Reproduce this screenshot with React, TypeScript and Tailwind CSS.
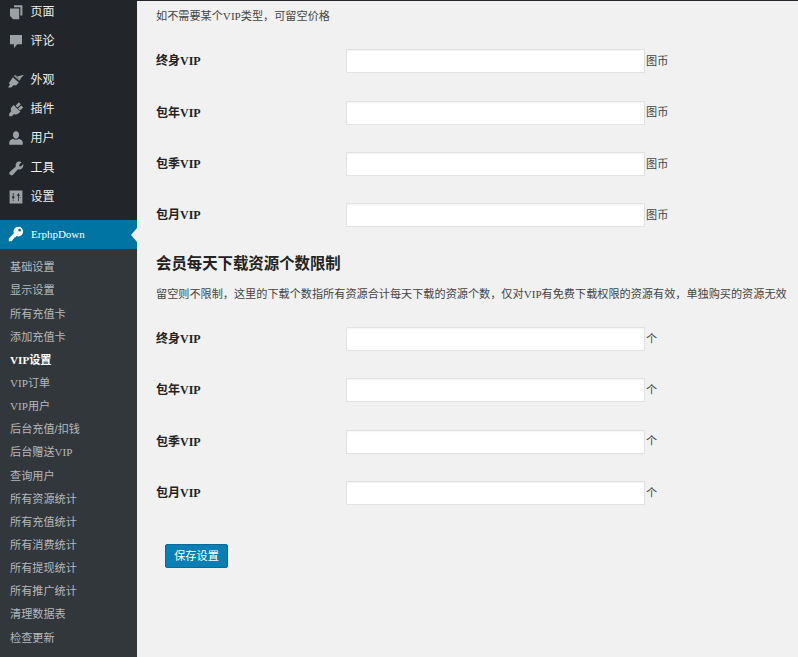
const fontStack = "font-['Liberation_Sans','Noto_Sans_CJK_SC',sans-serif]"

// latin runs in the shot are a narrow serif, the size comes from the parent
const Latin = ({ children }: { children: string }) => (
    <span className="font-['Liberation_Serif','Noto_Sans_CJK_SC',serif]">{children}</span>
)

const Mixed = ({ text }: { text: string }) => {
    const parts = text.split(/([A-Za-z]+)/)
    return (
        <>
            {parts.map((p, i) => (/^[A-Za-z]+$/.test(p) ? <Latin key={i}>{p}</Latin> : <span key={i}>{p}</span>))}
        </>
    )
}

const icons: Record<string, React.ReactNode> = {
    page: (
        <>
            <path d="M7.500 1.500H18v13h-2.500V4H7.500z" />
            <path d="M2.500 5.500H14V19H6.500l-4-4z" />
        </>
    ),
    comment: <path d="M2.500 2.500h15v11.500h-6l-4 5v-5h-5z" />,
    brush: (
        <>
            <path d="M20 3.500L11.500 5.500l3 4z" />
            <path d="M9 3.500l7 6-2 1.500-7-6z" fillOpacity="0.75" />
            <path d="M6 6.500l7.500 6.500-3.500 4-3-.5-3 3H0l2.500-4-1.500-1.500z" />
        </>
    ),
    plug: (
        <>
            <path d="M9.500 6l4-4.500 2.500 2.500-4 4z" />
            <path d="M12.500 9.500l4-4 2.500 2.500-4 4z" />
            <path d="M7 5l8.500 8.500-3 2.500c-1.500 1.200-3.300 1.200-4.800.3l-3 2.700H1.500v-3.500l2.700-2.800c-1-1.500-1-3.500.3-5z" />
        </>
    ),
    user: (
        <path d="M10 1.500c2.400 0 3.800 1.900 3.800 4.300S12.400 10.800 10 10.800 6.200 8.200 6.200 5.800 7.600 1.500 10 1.500zM1.500 15.500c0-2.200 3.200-4 5-4.500 1 1 2.300 1.300 3.500 1.300s2.500-.3 3.500-1.300c1.800.5 5 2.300 5 4.500v3h-17z" />
    ),
    tools: (
        <path d="M17 2.800l-3.200 3 .4 1.900 1.900.4 3-3c.4 2.300-.2 4.200-1.700 5.500-1.400 1.200-3.200 1.400-4.900.9L6 18.800c-.9.800-2.100.8-2.900 0l-.9-.9c-.8-.8-.8-2 0-2.900l7.600-6.800c-.5-1.700-.3-3.500.9-4.900C12.100 1.800 15 1.400 17 2.800z" />
    ),
    settings: (
        <path
            d="M2 2h16v16H2zM6 5v4.500H4.500L6.500 13l2-3.500H7V5zM6 13.500V15h1v-1.500zM13 5l-2 3.500h1.500V15h1V8.500H15zM15.500 10h-1v1h1z"
            fillRule="evenodd"
        />
    ),
    key: (
        <path d="M13 1a6 6 0 0 1 0 12c-.8 0-1.500-.1-2.200-.4L9 14.500H7.500V16H6v1.500L4.500 19H1v-3.500l6.300-6.300A6 6 0 0 1 13 1zm1.500 2.500a1.700 1.700 0 1 0 0 3.400 1.700 1.700 0 0 0 0-3.400z" fillRule="evenodd" />
    ),
}

const MenuIcon = ({ name, active }: { name: string; active?: boolean }) => (
    <svg viewBox="0 0 20 20" className={`w-[16px] h-[16px] shrink-0 ${active ? 'fill-white' : 'fill-[#9ca1a6]'}`}>
        {icons[name]}
    </svg>
)

const MenuItem = ({ icon, label }: { icon: string; label: string }) => (
    <li className="h-[29.300px] flex items-center pl-[8px] gap-[6.500px] text-[#eeeeee] text-[12px]">
        <MenuIcon name={icon} />
        <span>{label}</span>
    </li>
)

const subItems = [
    '基础设置',
    '显示设置',
    '所有充值卡',
    '添加充值卡',
    'VIP设置',
    'VIP订单',
    'VIP用户',
    '后台充值/扣钱',
    '后台赠送VIP',
    '查询用户',
    '所有资源统计',
    '所有充值统计',
    '所有消费统计',
    '所有提现统计',
    '所有推广统计',
    '清理数据表',
    '检查更新',
]

const Sidebar = () => (
    <aside className="w-[137px] shrink-0 bg-[#22262b] flex flex-col">
        <ul className="-mt-[2.500px]">
            <MenuItem icon="page" label="页面" />
            <MenuItem icon="comment" label="评论" />
        </ul>
        <ul className="mt-[9px]">
            <MenuItem icon="brush" label="外观" />
            <MenuItem icon="plug" label="插件" />
            <MenuItem icon="user" label="用户" />
            <MenuItem icon="tools" label="工具" />
            <MenuItem icon="settings" label="设置" />
        </ul>
        <div className="relative mt-[8px] h-[29px] bg-[#0074a2] flex items-center pl-[8px] gap-[7px] text-white text-[11px]">
            <MenuIcon name="key" active />
            <Latin>ErphpDown</Latin>
            <span className="absolute right-0 top-[8px] border-y-[7px] border-r-[6px] border-y-transparent border-r-[#f1f1f1]" />
        </div>
        <ul className="flex-1 bg-[#32373c] pt-[7.500px] pl-[10px] text-[11.150px] text-[#b4b9be]">
            {subItems.map(item => (
                <li key={item} className={`h-[23.150px] flex items-center ${item === 'VIP设置' ? 'font-bold text-white' : ''}`}>
                    <span><Mixed text={item} /></span>
                </li>
            ))}
        </ul>
    </aside>
)

const VipRow = ({ label, unit }: { label: string; unit: string }) => (
    <div className="h-[51.400px] flex items-center">
        <label className="w-[190px] text-[12px] font-bold text-[#222222]"><Mixed text={label} /></label>
        <input className="w-[299px] h-[24px] bg-white border border-[#e2e2e2] shadow-[inset_0_1px_2px_rgba(0,0,0,0.05)] outline-none" />
        <span className="ml-[1px] text-[#444444]">{unit}</span>
    </div>
)

const tiers = ['终身VIP', '包年VIP', '包季VIP', '包月VIP']

export default function App() {
    return (
        <div className={`h-[657px] w-[798px] overflow-hidden flex bg-[#f1f1f1] text-[11.150px] ${fontStack}`}>
            <Sidebar />
            <main className="flex-1 border-t border-[#22262b] pl-[19px]">
                <p className="mt-[6.500px] h-[17px] leading-[17px] text-[#444444]"><Mixed text="如不需要某个VIP类型，可留空价格" /></p>
                <div className="mt-[11px]">
                    {tiers.map(t => <VipRow key={t} label={t} unit="图币" />)}
                </div>
                <h2 className="mt-[13.800px] h-[17px] leading-[17px] text-[15.400px] font-bold text-[#222222]">会员每天下载资源个数限制</h2>
                <p className="mt-[14.500px] h-[17px] leading-[17px] text-[#444444] whitespace-nowrap"><Mixed text="留空则不限制，这里的下载个数指所有资源合计每天下载的资源个数，仅对VIP有免费下载权限的资源有效，单独购买的资源无效" /></p>
                <div className="mt-[10px]">
                    {tiers.map(t => <VipRow key={t} label={t} unit="个" />)}
                </div>
                <button className="mt-[25px] ml-[9px] w-[63px] h-[24px] rounded-[2px] bg-[#0b7fb4] border border-[#0a6a97] text-white text-[11.150px]">保存设置</button>
            </main>
        </div>
    )
}
